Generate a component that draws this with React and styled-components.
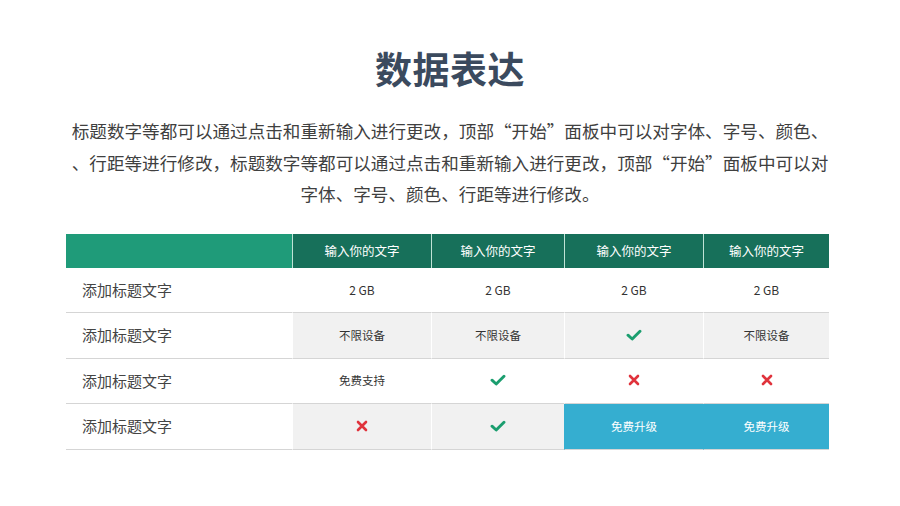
import React from "react";
import styled, { createGlobalStyle } from "styled-components";

const Global = createGlobalStyle`
  html, body { margin: 0; padding: 0; background: #fff; }
  body { font-family: "Noto Sans CJK SC", "Noto Sans", sans-serif; }
`;

const Page = styled.div`
  width: 900px;
  height: 506px;
  box-sizing: border-box;
  padding-top: 46px;
  display: flex;
  flex-direction: column;
  align-items: center;
  overflow: hidden;
`;

const Title = styled.h1`
  margin: 0;
  font-size: 37px;
  line-height: 44px;
  font-weight: 700;
  color: #3b4a5e;
  letter-spacing: 0.5px;
`;

const Lead = styled.p`
  margin: 25px 0 0;
  font-size: 17.6px;
  line-height: 31.5px;
  color: #404040;
  text-align: center;
  font-weight: 400;
`;

const Line = styled.span`
  display: block;
  white-space: nowrap;
`;

const Table = styled.div`
  margin-top: 24px;
  align-self: flex-start;
  margin-left: 66px;
  width: 763px;
  display: grid;
  grid-template-columns: 226px 139px 133px 139px 126px;
`;

const HeadCell = styled.div`
  height: 34px;
  display: flex;
  align-items: center;
  justify-content: center;
  background: ${(p) => (p.$first ? "#1f9b79" : "#17705a")};
  border-left: ${(p) => (p.$first ? "none" : "1px solid #bfe3d6")};
  color: #fff;
  font-size: 12.5px;
`;

const Label = styled.div`
  height: 45.5px;
  display: flex;
  align-items: center;
  padding-left: 16px;
  padding-bottom: 1px;
  box-sizing: border-box;
  font-size: 15px;
  color: #444;
  border-bottom: 1px solid #d5d5d5;
  background: #fff;
`;

const Cell = styled.div`
  height: 45.5px;
  box-sizing: border-box;
  padding-bottom: 1px;
  display: flex;
  align-items: center;
  justify-content: center;
  font-size: ${(p) => (p.$num ? "12px" : "11.5px")};
  color: ${(p) => (p.$tone === "blue" ? "#fff" : "#333")};
  background: ${(p) =>
    p.$tone === "gray" ? "#f1f1f1" : p.$tone === "blue" ? "#35aed0" : "#fff"};
  border-left: 1px solid
    ${(p) => (p.$tone === "blue" ? "#35aed0" : "#fff")};
  border-bottom: 1px solid #d5d5d5;
`;

const Check = () => (
  <svg width="16" height="12" viewBox="0 0 16 12">
    <path
      d="M2 6.2 L6.2 10 L14 2.2"
      fill="none"
      stroke="#1b9e6f"
      strokeWidth="2.9"
      strokeLinecap="round"
      strokeLinejoin="round"
    />
  </svg>
);

const Cross = () => (
  <svg width="12" height="12" viewBox="0 0 12 12">
    <path
      d="M2 2 L10 10 M10 2 L2 10"
      fill="none"
      stroke="#e0333c"
      strokeWidth="2.6"
      strokeLinecap="round"
    />
  </svg>
);

const render = (v) => (v === "check" ? <Check /> : v === "cross" ? <Cross /> : v);

const rows = [
  { tone: ["w", "w", "w", "w"], vals: ["2 GB", "2 GB", "2 GB", "2 GB"], num: true },
  { tone: ["gray", "gray", "gray", "gray"], vals: ["不限设备", "不限设备", "check", "不限设备"] },
  { tone: ["w", "w", "w", "w"], vals: ["免费支持", "check", "cross", "cross"] },
  { tone: ["gray", "gray", "blue", "blue"], vals: ["cross", "check", "免费升级", "免费升级"] },
];

export default function App() {
  return (
    <Page>
      <Global />
      <Title>数据表达</Title>
      <Lead>
        <Line>标题数字等都可以通过点击和重新输入进行更改，顶部“开始”面板中可以对字体、字号、颜色、</Line>
        <Line>、行距等进行修改，标题数字等都可以通过点击和重新输入进行更改，顶部“开始”面板中可以对</Line>
        <Line>字体、字号、颜色、行距等进行修改。</Line>
      </Lead>
      <Table>
        <HeadCell $first />
        {[0, 1, 2, 3].map((i) => (
          <HeadCell key={i}>输入你的文字</HeadCell>
        ))}
        {rows.map((r, ri) => (
          <React.Fragment key={ri}>
            <Label>添加标题文字</Label>
            {r.vals.map((v, ci) => (
              <Cell key={ci} $tone={r.tone[ci]} $num={r.num}>
                {render(v)}
              </Cell>
            ))}
          </React.Fragment>
        ))}
      </Table>
    </Page>
  );
}
